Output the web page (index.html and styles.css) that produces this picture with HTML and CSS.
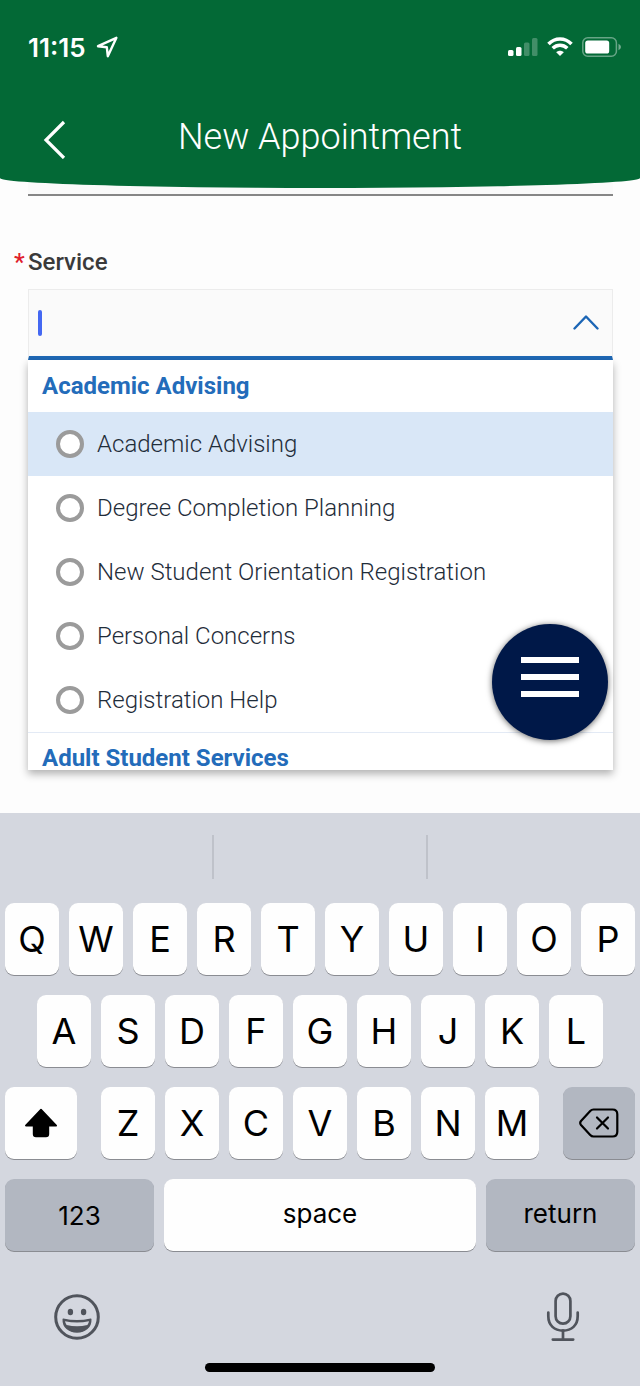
FILE: index.html
```html
<!DOCTYPE html>
<html lang="en">
  <head>
    <meta charset="UTF-8" />
    <meta name="viewport" content="width=device-width, initial-scale=1.0" />
    <title>New Appointment</title>
    <link rel="stylesheet" href="styles.css">
  </head>
  <body>
    <header class="header">
      <div class="status-bar">
        <span class="time">11:15</span>
        <svg class="location" width="22" height="22" viewBox="0 0 22 22" fill="none" stroke="#fff" stroke-width="2.4" stroke-linejoin="round">
          <path d="M20.4 1.8 L2 10.2 L10.8 11.2 L11.8 20.2 Z" />
        </svg>
        <div class="status-icons">
          <svg width="30" height="20" viewBox="0 0 30 20" fill="#fff">
            <rect x="0" y="13" width="5.5" height="6" rx="1.5" />
            <rect x="8" y="10" width="5.5" height="9" rx="1.5" />
            <rect x="16" y="5.5" width="5.5" height="13.5" rx="1.5" opacity=".25" />
            <rect x="24" y="1" width="5.5" height="18" rx="1.5" opacity=".25" />
          </svg>
          <svg width="26" height="20" viewBox="0 0 26 20" fill="none" stroke="#fff" stroke-width="3.6">
            <path d="M1.5 7 C8 0.3 18 0.3 24.5 7" />
            <path d="M5.7 11.3 C10 7.3 16 7.3 20.3 11.3" />
            <path d="M13 19 L9.2 15.2 C11.3 13.2 14.7 13.2 16.8 15.2 Z" fill="#fff" stroke="none" />
          </svg>
          <svg width="39" height="20" viewBox="0 0 39 20">
            <rect x="0.8" y="0.8" width="33.6" height="18.4" rx="5" fill="none" stroke="#fff" stroke-width="1.5" opacity=".4" />
            <rect x="3.2" y="3.4" width="24" height="13.2" rx="2.6" fill="#fff" />
            <path d="M36.5 6.8 Q39 8 39 10 Q39 12 36.5 13.2 Z" fill="#fff" opacity=".45" />
          </svg>
        </div>
      </div>
      <div class="title-bar">
        <button type="button" class="back" aria-label="Back">
          <svg width="24" height="40" viewBox="0 0 24 40" fill="none" stroke="#fff" stroke-width="3.2">
            <path d="M21 3 L3 21 L21 39" />
          </svg>
        </button>
        <h1>New Appointment</h1>
      </div>
    </header>

    <main class="content">
      <div class="previous-field"></div>

      <div class="label-row">
        <span class="required">*</span>
        <label for="service">Service</label>
      </div>

      <div class="select">
        <div class="select-field">
          <span class="caret"></span>
          <input type="text" id="service" name="service" autocomplete="off" />
          <button type="button" class="toggle" aria-label="Close list">
            <svg width="28" height="16" viewBox="0 0 28 16" fill="none" stroke="#1b65b5" stroke-width="2.4" stroke-linecap="round" stroke-linejoin="round">
              <path d="M2.5 13.5 L14 1.5 L25.5 13.5" />
            </svg>
          </button>
        </div>

        <div class="menu">
          <h2>Academic Advising</h2>
          <label class="option active"><input type="radio" name="option" />Academic Advising</label>
          <label class="option"><input type="radio" name="option" />Degree Completion Planning</label>
          <label class="option"><input type="radio" name="option" />New Student Orientation Registration</label>
          <label class="option"><input type="radio" name="option" />Personal Concerns</label>
          <label class="option"><input type="radio" name="option" />Registration Help</label>
          <h2 class="next-group">Adult Student Services</h2>
        </div>

        <button type="button" class="fab" aria-label="Menu">
          <span></span>
          <span></span>
          <span></span>
        </button>
      </div>
    </main>

    <section class="keyboard">
      <div class="suggestions">
        <span></span>
        <span></span>
        <span></span>
      </div>
      <div class="keys">
        <div class="row">
          <button type="button">Q</button>
          <button type="button">W</button>
          <button type="button">E</button>
          <button type="button">R</button>
          <button type="button">T</button>
          <button type="button">Y</button>
          <button type="button">U</button>
          <button type="button">I</button>
          <button type="button">O</button>
          <button type="button">P</button>
        </div>
        <div class="row row-middle">
          <button type="button">A</button>
          <button type="button">S</button>
          <button type="button">D</button>
          <button type="button">F</button>
          <button type="button">G</button>
          <button type="button">H</button>
          <button type="button">J</button>
          <button type="button">K</button>
          <button type="button">L</button>
        </div>
        <div class="row row-shift">
          <button type="button" class="side" aria-label="Shift">
            <svg width="34" height="30" viewBox="0 0 34 30" fill="#000" stroke="#000" stroke-width="1.6" stroke-linejoin="round">
              <path d="M17 1.6 L32.2 17.6 H24.4 V26 Q24.4 28.4 22 28.4 H12 Q9.6 28.4 9.6 26 V17.6 H1.8 Z" />
            </svg>
          </button>
          <div class="row letters">
            <button type="button">Z</button>
            <button type="button">X</button>
            <button type="button">C</button>
            <button type="button">V</button>
            <button type="button">B</button>
            <button type="button">N</button>
            <button type="button">M</button>
          </div>
          <button type="button" class="side dark" aria-label="Delete">
            <svg width="40" height="30" viewBox="0 0 40 30" fill="none" stroke="#000" stroke-width="2.2" stroke-linejoin="round" stroke-linecap="round">
              <path d="M14.5 1.5 H33.5 Q38.3 1.5 38.3 6.3 V23.7 Q38.3 28.5 33.5 28.5 H14.5 Q12.6 28.5 11.2 27 L2 17 Q0.4 15 2 13 L11.2 3 Q12.6 1.5 14.5 1.5 Z" />
              <path d="M18 9.5 L29 20.5 M29 9.5 L18 20.5" />
            </svg>
          </button>
        </div>
        <div class="row row-bottom">
          <button type="button" class="wide dark">123</button>
          <button type="button" class="space">space</button>
          <button type="button" class="wide dark">return</button>
        </div>
      </div>
      <div class="tools">
        <button type="button" aria-label="Emoji">
          <svg width="46" height="46" viewBox="0 0 46 46">
            <circle cx="23" cy="23" r="21.3" fill="none" stroke="#50545c" stroke-width="3" />
            <ellipse cx="16.4" cy="18" rx="2.7" ry="3.2" fill="#50545c" />
            <ellipse cx="29.6" cy="18" rx="2.7" ry="3.2" fill="#50545c" />
            <path d="M9.2 25.2 Q23 28.4 36.8 25.2 C37.2 33 31 38 23 38 C15 38 8.8 33 9.2 25.2 Z" fill="#50545c" stroke="#50545c" stroke-width="1.4" stroke-linejoin="round" />
            <path d="M11 27.2 Q23 30 35 27.2 Q34.6 29.4 33.4 31 Q23 33.6 12.6 31 Q11.4 29.4 11 27.2 Z" fill="#d4d7df" />
          </svg>
        </button>
        <button type="button" aria-label="Dictate">
          <svg width="34" height="50" viewBox="0 0 34 50" fill="none" stroke="#50545c" stroke-width="2.7" stroke-linecap="round">
            <rect x="9.6" y="1.6" width="14.8" height="30" rx="7.4" />
            <path d="M2.3 20.5 V24 C2.3 33.5 8.5 38.6 17 38.6 C25.5 38.6 31.7 33.5 31.7 24 V20.5" />
            <path d="M17 38.6 V47.6 M6.8 47.6 H27.2" />
          </svg>
        </button>
      </div>
      <div class="home-bar"></div>
    </section>
  </body>
</html>
```

FILE: styles.css
```css
* {
    box-sizing: border-box;
}

body {
    margin: 0;
    min-height: 100vh;
    display: flex;
    flex-direction: column;
    font-family: Roboto, sans-serif;
    background-color: #fdfdfd;
}

button {
    border: 0;
    padding: 0;
    background: none;
    color: #000;
    cursor: pointer;
}

svg {
    display: block;
}

/* Header */
.header {
    position: relative;
    z-index: 1;
    padding-bottom: 8px;
    background-color: #036936;
    color: #fff;
    border-radius: 0 0 50% 50% / 0 0 10px 10px;
}

.status-bar {
    display: flex;
    align-items: center;
    height: 94px;
    padding: 0 19px 0 28px;
}

.time {
    font-family: Inter, sans-serif;
    font-size: 26px;
    font-weight: 600;
}

.location {
    margin-left: 10px;
}

.status-icons {
    display: flex;
    gap: 9px;
    margin-left: auto;
}

.title-bar {
    display: grid;
    grid-template-columns: 67px 1fr 67px;
    align-items: center;
    height: 86px;
}

.back {
    justify-self: end;
    padding-top: 4px;
}

h1 {
    margin: 0;
    font-size: 36px;
    font-weight: 300;
    text-align: center;
}

/* Form */
.content {
    flex: 1;
    padding: 0 27px 42px 28px;
}

.previous-field {
    height: 16px;
    margin-top: -8px;
    background-color: #fafafa;
    border-bottom: 2px solid #868686;
}

.label-row {
    display: flex;
    align-items: center;
    height: 32px;
    margin: 50px 0 11px -14px;
    font-size: 24px;
    font-weight: 500;
    color: #3a3a3a;
}

.required {
    width: 14px;
    color: #e0202a;
}

.select {
    position: relative;
}

.select-field {
    display: flex;
    align-items: center;
    height: 71px;
    padding: 0 12px 0 9px;
    background-color: #fafafa;
    border: 1px solid #ececec;
    border-bottom: 4px solid #1f68b5;
}

.caret {
    width: 4px;
    height: 26px;
    border-radius: 2px;
    background-color: #4468f2;
}

.select-field input {
    flex: 1;
    min-width: 0;
    height: 100%;
    border: 0;
    outline: 0;
    background: none;
    font: 300 24px Roboto, sans-serif;
}

.menu {
    height: 410px;
    overflow: hidden;
    background-color: #fff;
    box-shadow: 0 4px 8px rgba(0, 0, 0, 0.3);
}

.menu h2 {
    margin: 0;
    padding: 0 14px;
    font-size: 24px;
    font-weight: 700;
    line-height: 52px;
    color: #236cba;
}

.menu .next-group {
    border-top: 1px solid #e3eaf5;
    line-height: 50px;
}

.option {
    display: flex;
    align-items: center;
    gap: 13px;
    height: 64px;
    padding-left: 28px;
    font-size: 24px;
    font-weight: 300;
    color: #1f2d3a;
}

.option.active {
    background-color: #d9e7f7;
}

.option input {
    appearance: none;
    width: 28px;
    height: 28px;
    margin: 0;
    border: 4px solid #9b9b9b;
    border-radius: 50%;
    background-color: #fff;
}

/* Floating menu button, stays over the list */
.fab {
    position: absolute;
    right: 5px;
    bottom: 30px;
    display: flex;
    flex-direction: column;
    align-items: center;
    gap: 11px;
    width: 116px;
    height: 116px;
    padding-top: 33px;
    border-radius: 50%;
    background-color: #001848;
    box-shadow: 0 1px 6px rgba(0, 0, 0, 0.6);
}

.fab span {
    width: 58px;
    height: 6px;
    background-color: #fff;
}

/* Keyboard */
.keyboard {
    background-color: #d4d7df;
    font-family: Inter, sans-serif;
}

.suggestions {
    display: flex;
    height: 90px;
    padding: 22px 0 24px;
}

.suggestions span {
    flex: 1;
}

.suggestions span + span {
    border-left: 2px solid #bfc2ca;
}

.keys {
    display: flex;
    flex-direction: column;
    gap: 20px;
    padding: 0 5px;
}

.row {
    display: flex;
    gap: 10px;
}

.row-middle {
    padding: 0 32px;
}

.row-shift {
    gap: 24px;
}

.letters {
    flex: 1;
}

.row button {
    flex: 1;
    display: flex;
    align-items: center;
    justify-content: center;
    height: 72px;
    border-radius: 9px;
    background-color: #fefefe;
    box-shadow: 0 1px 0 #8a8c92;
    font: 400 36px Inter, sans-serif;
}

.row .side {
    flex: 0 0 72px;
}

.row .dark {
    background-color: #b2b7c1;
}

.row .wide {
    flex: 0 0 149px;
}

.row .wide,
.row .space {
    font-size: 26px;
}

.row-bottom .space,
.row-bottom .wide:last-child {
    padding-bottom: 4px;
}

.tools {
    display: flex;
    justify-content: space-between;
    align-items: center;
    height: 112px;
    padding: 20px 60px 0 54px;
}

.home-bar {
    width: 36%;
    height: 9px;
    margin: 0 auto 14px;
    border-radius: 5px;
    background-color: #000;
}
```
